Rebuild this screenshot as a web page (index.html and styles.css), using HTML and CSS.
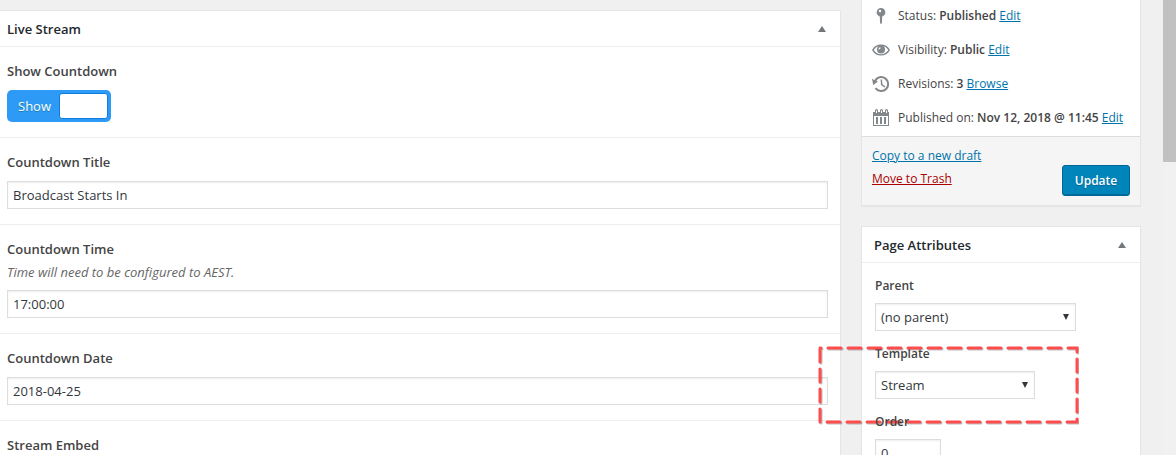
FILE: index.html
```
<!DOCTYPE html>
<html lang="en">

<head>
    <meta charset="UTF-8">
    <meta name="viewport" content="width=device-width, initial-scale=1.0">
    <title>Edit Page</title>
    <link rel="stylesheet" href="styles.css">
</head>

<body>
    <div class="editor">
        <main class="postbox main-box">
            <header class="box-header">
                <h2>Live Stream</h2>
                <button class="toggle-box" type="button" aria-label="Toggle Live Stream"></button>
            </header>
            <div class="field">
                <label class="field-label" for="show-countdown">Show Countdown</label>
                <div class="switch">
                    <input type="checkbox" id="show-countdown" checked>
                    <span class="switch-on">Show</span>
                    <span class="switch-knob"></span>
                </div>
            </div>
            <div class="field">
                <label class="field-label" for="countdown-title">Countdown Title</label>
                <input class="text" type="text" id="countdown-title" value="Broadcast Starts In">
            </div>
            <div class="field">
                <label class="field-label" for="countdown-time">Countdown Time</label>
                <p class="description">Time will need to be configured to AEST.</p>
                <input class="text" type="text" id="countdown-time" value="17:00:00">
            </div>
            <div class="field">
                <label class="field-label" for="countdown-date">Countdown Date</label>
                <input class="text" type="text" id="countdown-date" value="2018-04-25">
            </div>
            <div class="field">
                <label class="field-label" for="stream-embed">Stream Embed</label>
                <textarea class="text" id="stream-embed"></textarea>
            </div>
        </main>

        <aside class="sidebar">
            <section class="postbox publish">
                <ul class="publish-list">
                    <li>
                        <svg viewBox="0 0 20 20"><path d="M10 2a4.300 4.300 0 0 0-2.500 7.800l1.300.7.2 5.500.6 2h.8l.6-2 .2-5.500 1.300-.7A4.300 4.300 0 0 0 10 2z"/><circle cx="9" cy="5" r="1.200" fill="#fff"/></svg>
                        <span>Status: <b>Published</b> <a href="#">Edit</a></span>
                    </li>
                    <li>
                        <svg viewBox="0 0 20 20"><path fill-rule="evenodd" d="M1 10c2-3.700 5.200-5.500 9-5.500s7 1.800 9 5.500c-2 3.700-5.200 5.500-9 5.500S3 13.700 1 10zm1.700 0c1.700 2.700 4.200 4.200 7.300 4.200s5.600-1.500 7.300-4.200c-1-1.700-2.300-2.900-4-3.600H6.700c-1.700.7-3 1.900-4 3.600z"/><circle cx="10" cy="9.500" r="4"/><path fill="#fff" d="M9.500 7.200a2 2 0 0 0-2 2.200c1.300.2 2.300-.7 2-2.200z"/></svg>
                        <span>Visibility: <b>Public</b> <a href="#">Edit</a></span>
                    </li>
                    <li>
                        <svg viewBox="0 0 20 20"><path class="line" d="M3.900 7A7 7 0 1 1 4.500 14.200"/><path d="M1 4.500l1.600 1.300L7 7.500 2.200 11z"/><path class="line thin" d="M10.300 5.500L10.700 10.500 14 13"/></svg>
                        <span>Revisions: <b>3</b> <a href="#">Browse</a></span>
                    </li>
                    <li>
                        <svg viewBox="0 0 20 20"><path fill-rule="evenodd" d="M2 4h2V2.500a1.500 1.500 0 0 1 3 0V4h2V2.500a1.500 1.500 0 0 1 3 0V4h2V2.500a1.500 1.500 0 0 1 3 0V4h1v14H2zm1 4v9h14V8zM5 2.500V5h1V2.500zm5 0V5h1V2.500zm5 0V5h1V2.500z"/><path d="M5 9h2v7H5zm4 0h2v7H9zm4 0h2v7h-2z"/></svg>
                        <span>Published on: <b>Nov 12, 2018 @ 11:45</b> <a href="#">Edit</a></span>
                    </li>
                </ul>
                <div class="publish-actions">
                    <div class="links">
                        <a href="#">Copy to a new draft</a>
                        <a class="trash" href="#">Move to Trash</a>
                    </div>
                    <button class="btn" type="button">Update</button>
                </div>
            </section>

            <section class="postbox attributes">
                <header class="box-header">
                    <h2>Page Attributes</h2>
                    <button class="toggle-box" type="button" aria-label="Toggle Page Attributes"></button>
                </header>
                <div class="attribute">
                    <label for="parent">Parent</label>
                    <select class="parent-select" id="parent">
                        <option>(no parent)</option>
                    </select>
                </div>
                <div class="attribute">
                    <label for="template">Template</label>
                    <select class="template-select" id="template">
                        <option>Stream</option>
                    </select>
                    <svg class="highlight" viewBox="0 0 262 80">
                        <rect class="shade" x="4" y="4" width="257" height="74"/>
                        <rect x="3" y="3" width="257" height="74"/>
                    </svg>
                </div>
                <div class="attribute">
                    <label for="order">Order</label>
                    <input class="text order" type="text" id="order" value="0">
                </div>
            </section>
        </aside>
    </div>
    <div class="scrollbar"><div class="thumb"></div></div>
</body>

</html>
```
FILE: styles.css
```
* {
    box-sizing: border-box;
}

body {
    margin: 0;
    height: 100vh;
    overflow: hidden;
    display: flex;
    background: #f0f0f0;
    color: #444;
    font-family: "Open Sans", "Noto Sans", sans-serif;
    font-size: 13px;
    line-height: 18px;
}

a {
    color: #0073aa;
}

b {
    font-weight: 600;
}

.editor {
    flex: 1;
    display: grid;
    grid-template-columns: 1fr 280px;
    gap: 20px;
    align-items: start;
    padding-right: 22px;
}

.postbox {
    background: #fff;
    border: 1px solid #e5e5e5;
    box-shadow: 0 1px 1px rgba(0, 0, 0, 0.04);
}

.main-box {
    margin-top: 10px;
    border-left: none;
}

.box-header {
    display: flex;
    justify-content: space-between;
    align-items: center;
    height: 36px;
    padding: 0 12px 0 7px;
    border-bottom: 1px solid #eee;
}

.box-header h2 {
    margin: 0;
    font-size: 13px;
    font-weight: 600;
    color: #23282d;
}

.toggle-box {
    width: 12px;
    height: 12px;
    padding: 0;
    border: none;
    background: none;
    display: grid;
    place-items: center;
}

.toggle-box::before {
    content: "";
    border: 4px solid transparent;
    border-top: none;
    border-bottom: 6px solid #72777c;
}

.field {
    padding: 15px 12px 15px 7px;
    border-bottom: 1px solid #eee;
}

.field-label {
    display: block;
    margin-bottom: 10px;
    font-weight: 600;
}

.field-label:has(+ .description) {
    margin-bottom: 5px;
}

.description {
    margin: 0 0 9px;
    font-style: italic;
    color: #666;
}

.text,
select {
    display: block;
    width: 100%;
    height: 28px;
    padding: 0 5px;
    border: 1px solid #ddd;
    border-radius: 0;
    background: #fff;
    box-shadow: inset 0 1px 2px rgba(0, 0, 0, 0.07);
    color: #32373c;
    font-family: inherit;
    font-size: 13px;
}

.switch {
    position: relative;
    display: flex;
    width: 104px;
    height: 32px;
    padding: 3px;
    border-radius: 5px;
    background: #2d9bf5;
    color: #fff;
}

.switch input {
    position: absolute;
    inset: 0;
    width: 100%;
    height: 100%;
    margin: 0;
    opacity: 0;
}

.switch-on {
    flex: 1;
    line-height: 26px;
    text-align: center;
    text-shadow: 0 1px 0 #1f7db1;
}

.switch-knob {
    width: 49px;
    border: 1px solid #0f7ddb;
    border-radius: 3px;
    background: #fff;
}

.sidebar {
    display: grid;
    grid-template-columns: minmax(0, 1fr);
    gap: 20px;
}

.publish {
    border-top: none;
    font-size: 12px;
}

.publish-list {
    display: grid;
    gap: 3px;
    margin: 0;
    padding: 0 0 3px 9px;
    list-style: none;
}

.publish-list li {
    display: flex;
    align-items: center;
    gap: 7px;
    height: 31px;
    white-space: nowrap;
}

.publish-list svg {
    flex: none;
    width: 20px;
    height: 20px;
    fill: #82878c;
}

.publish-list .line {
    fill: none;
    stroke: #82878c;
    stroke-width: 2;
}

.publish-list .thin {
    stroke-width: 1.5;
}

.publish-actions {
    display: flex;
    justify-content: space-between;
    align-items: flex-end;
    padding: 8px 10px 9px;
    border-top: 1px solid #ddd;
    background: #f5f5f5;
}

.links {
    display: grid;
    gap: 5px;
    align-self: flex-start;
    padding-top: 2px;
}

.trash {
    color: #a00;
}

.btn {
    width: 68px;
    height: 31px;
    margin-top: 20px;
    padding: 0;
    border: 1px solid #006799;
    border-radius: 3px;
    background: #0085ba;
    box-shadow: inset 0 -1px 0 #006799;
    color: #fff;
    font-family: inherit;
    font-size: 12px;
    font-weight: 600;
    text-shadow: 0 1px 1px #006799;
}

.attributes .box-header {
    padding-left: 12px;
}

.attribute {
    position: relative;
    padding: 14px 12px 0 13px;
}

.attribute label {
    display: block;
    margin-bottom: 8px;
    font-size: 12px;
    font-weight: 600;
}

select {
    appearance: none;
    background: #fff url("data:image/svg+xml,%3Csvg xmlns='http://www.w3.org/2000/svg' viewBox='0 0 8 8'%3E%3Cpath d='M1 1h6L4 7z' fill='%2332373c'/%3E%3C/svg%3E") no-repeat right 5px center / 8px 8px;
}

.parent-select {
    width: 201px;
}

.template-select {
    width: 160px;
}

.attribute .order {
    width: 66px;
}

/* dashed marker over the template field */
.highlight {
    position: absolute;
    top: 14px;
    left: -45px;
    width: 262px;
    height: 80px;
    pointer-events: none;
}

.highlight rect {
    fill: none;
    stroke: #ff4d4d;
    stroke-width: 3;
    stroke-linecap: round;
    stroke-dasharray: 13 7;
    stroke-dashoffset: -8;
}

.highlight .shade {
    stroke: rgba(0, 0, 0, 0.25);
}

.scrollbar {
    width: 13px;
    background: #f1f1f1;
}

.thumb {
    height: 162px;
    background: #c1c1c1;
}
```
